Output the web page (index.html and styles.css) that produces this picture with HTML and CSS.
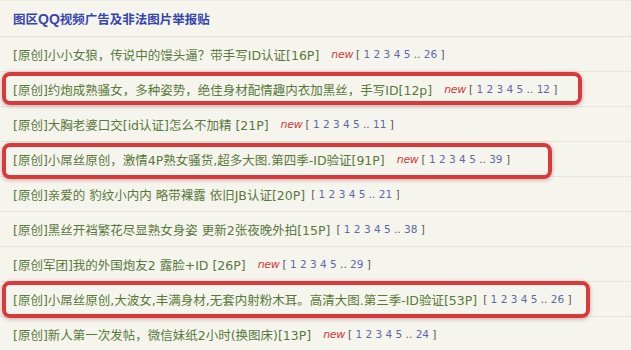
FILE: index.html
```html
<!DOCTYPE html>
<html lang="zh-CN">
<head>
    <meta charset="UTF-8">
    <meta name="viewport" content="width=device-width, initial-scale=1.0">
    <title>图区举报贴</title>
    <link rel="stylesheet" href="styles.css">
</head>
<body>
    <div class="board">
        <div class="board-head">
            <a class="head-link" href="#">图区<b>QQ</b>视频广告及非法图片举报贴</a>
        </div>

        <ul class="threads">
            <li class="thread">
                <a class="title" href="#">[原创]小小女狼，传说中的馒头逼？带手写ID认证[16P]</a>
                <em class="new">new</em>
                <span class="pager">[ <a>1</a> <a>2</a> <a>3</a> <a>4</a> <a>5</a> .. <a>26</a> ]</span>
            </li>
            <li class="thread">
                <a class="title" href="#">[原创]约炮成熟骚女，多种姿势，绝佳身材配情趣内衣加黑丝，手写ID[12p]</a>
                <em class="new">new</em>
                <span class="pager">[ <a>1</a> <a>2</a> <a>3</a> <a>4</a> <a>5</a> .. <a>12</a> ]</span>
            </li>
            <li class="thread">
                <a class="title" href="#">[原创]大胸老婆口交[id认证]怎么不加精 [21P]</a>
                <em class="new">new</em>
                <span class="pager">[ <a>1</a> <a>2</a> <a>3</a> <a>4</a> <a>5</a> .. <a>11</a> ]</span>
            </li>
            <li class="thread">
                <a class="title" href="#">[原创]小屌丝原创，激情4P熟女骚货,超多大图.第四季-ID验证[91P]</a>
                <em class="new">new</em>
                <span class="pager">[ <a>1</a> <a>2</a> <a>3</a> <a>4</a> <a>5</a> .. <a>39</a> ]</span>
            </li>
            <li class="thread">
                <a class="title" href="#">[原创]亲爱的 豹纹小内内 略带裸露 依旧JB认证[20P]</a>
                <span class="pager">[ <a>1</a> <a>2</a> <a>3</a> <a>4</a> <a>5</a> .. <a>21</a> ]</span>
            </li>
            <li class="thread">
                <a class="title" href="#">[原创]黑丝开裆繁花尽显熟女身姿 更新2张夜晚外拍[15P]</a>
                <span class="pager">[ <a>1</a> <a>2</a> <a>3</a> <a>4</a> <a>5</a> .. <a>38</a> ]</span>
            </li>
            <li class="thread">
                <a class="title" href="#">[原创军团]我的外国炮友2 露脸+ID [26P]</a>
                <em class="new">new</em>
                <span class="pager">[ <a>1</a> <a>2</a> <a>3</a> <a>4</a> <a>5</a> .. <a>29</a> ]</span>
            </li>
            <li class="thread">
                <a class="title" href="#">[原创]小屌丝原创,大波女,丰满身材,无套内射粉木耳。高清大图.第三季-ID验证[53P]</a>
                <span class="pager">[ <a>1</a> <a>2</a> <a>3</a> <a>4</a> <a>5</a> .. <a>26</a> ]</span>
            </li>
            <li class="thread">
                <a class="title" href="#">[原创]新人第一次发帖，微信妹纸2小时(换图床)[13P]</a>
                <em class="new">new</em>
                <span class="pager">[ <a>1</a> <a>2</a> <a>3</a> <a>4</a> <a>5</a> .. <a>24</a> ]</span>
            </li>
        </ul>

        <!-- red marks drawn over the reported threads -->
        <div class="mark mark-1"></div>
        <div class="mark mark-2"></div>
        <div class="mark mark-3"></div>
    </div>
</body>
</html>
```

FILE: styles.css
```css
body { margin: 0; background-color: #f5f5ee; font-family: "DejaVu Sans", "Noto Sans CJK SC", sans-serif; }
a { text-decoration: none; }

.board { position: relative; border-top: 1px solid #e9e9df; }

.board-head { height: 35px; display: flex; align-items: center; padding-left: 13px; border-bottom: 1px solid #e3e3d8; }
.head-link { color: #3545b0; font-size: 12.5px; font-weight: bold; }
.head-link b { font-family: "Liberation Sans", sans-serif; font-size: 14px; }

.threads { list-style: none; margin: 0; padding: 0; }
.thread { height: 34px; display: flex; align-items: center; padding-left: 13px; border-bottom: 1px solid #e6e6dc; white-space: nowrap; }
.title { color: #58793a; font-size: 12.5px; margin-right: 6px; }
.new { color: #d23a3a; font-size: 11px; margin: 0 3px 0 6px; letter-spacing: -0.3px; }
.pager { color: #555; font-size: 10.5px; }
.pager a { color: #5a6aa6; }

/* Annotation boxes */
.mark {
    position: absolute;
    left: 2px;
    border: 4px solid #d83a3c;
    border-radius: 8px;
    box-shadow: 0 1px 4px rgba(120, 20, 20, 0.35);
    box-sizing: border-box;
}
.mark-1 { top: 71px; width: 580px; height: 33px; }
.mark-2 { top: 142px; width: 550px; height: 36px; }
.mark-3 { top: 280px; width: 588px; height: 37px; }
```
